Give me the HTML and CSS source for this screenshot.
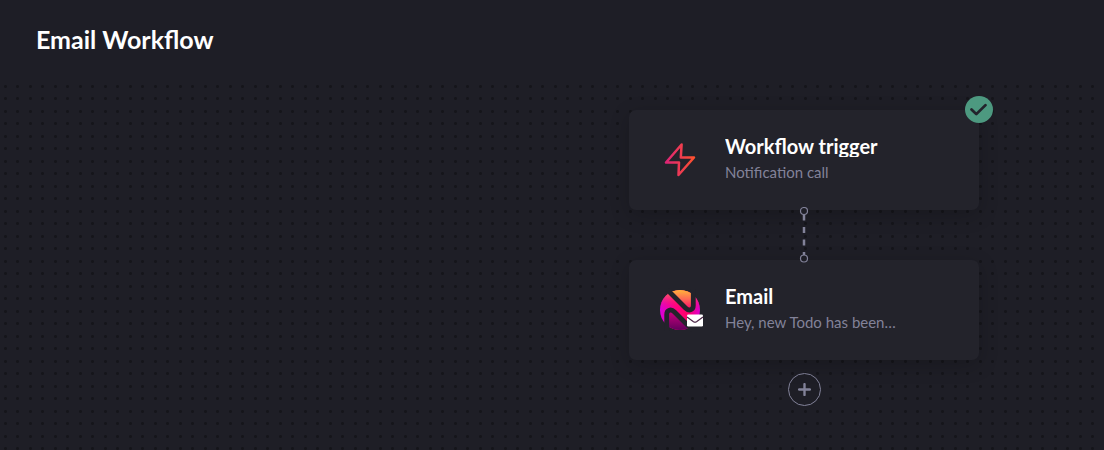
FILE: index.html
```html
<!DOCTYPE html>
<html lang="en">
<head>
<meta charset="utf-8">
<meta name="viewport" content="width=device-width, initial-scale=1">
<title>Email Workflow</title>
<link rel="stylesheet" href="styles.css">
</head>
<body>
<header class="header"><h1 class="page-title">Email Workflow</h1></header>
<main class="canvas">
  <div class="flow">
    <section class="node">
      <svg class="node-icon" viewBox="0 0 44 44" aria-hidden="true">
        <defs><linearGradient id="bolt" x1="0" y1="0" x2="1" y2="0"><stop offset="0" stop-color="#dd2476"/><stop offset="1" stop-color="#ff512f"/></linearGradient></defs>
        <path d="M23.600 6.500 8 24.500H21L20.500 37 36 19.500H22.800Z" fill="none" stroke="url(#bolt)" stroke-width="2.500" stroke-linejoin="round"/>
      </svg>
      <div class="node-text">
        <h2 class="node-title">Workflow trigger</h2>
        <p class="node-note">Notification call</p>
      </div>
      <svg class="badge" viewBox="0 0 28 28" preserveAspectRatio="none" role="img" aria-label="Active">
        <circle cx="14" cy="14" r="14" fill="#4d9980"/>
        <path d="M6.500 14 11.300 18.800 20.500 9.500" fill="none" stroke="#23232b" stroke-width="2.800" stroke-linecap="round" stroke-linejoin="round"/>
      </svg>
    </section>
    <svg class="connector" viewBox="0 0 10 56" aria-hidden="true">
      <path d="M5 7.500V52" stroke="#828299" stroke-width="2.500" stroke-dasharray="6 6.500"/>
      <g fill="#1e1e26" stroke="#828299" stroke-width="1.200"><circle cx="5" cy="4" r="3.500"/><circle cx="5" cy="51.500" r="3.500"/></g>
    </svg>
    <section class="node">
      <svg class="node-icon" viewBox="0 0 44 44" aria-hidden="true">
        <defs>
          <clipPath id="disc"><circle cx="22" cy="22" r="20"/></clipPath>
          <linearGradient id="band" gradientUnits="userSpaceOnUse" x1="2" y1="28" x2="42" y2="28"><stop offset="0" stop-color="#d900dc"/><stop offset=".4" stop-color="#ff0080"/><stop offset=".7" stop-color="#ff0068"/><stop offset="1" stop-color="#dd00d0"/></linearGradient>
          <linearGradient id="glow" gradientUnits="userSpaceOnUse" x1="22" y1="3" x2="22" y2="21"><stop offset="0" stop-color="#ff7a4d"/><stop offset="1" stop-color="#ff006a" stop-opacity="0"/></linearGradient>
          <linearGradient id="upper" gradientUnits="userSpaceOnUse" x1="22" y1="2" x2="22" y2="20"><stop offset="0" stop-color="#ffb33a"/><stop offset=".5" stop-color="#ff6a55"/><stop offset="1" stop-color="#ff1068"/></linearGradient>
          <linearGradient id="lower" gradientUnits="userSpaceOnUse" x1="20" y1="24" x2="20" y2="42"><stop offset="0" stop-color="#c8007c"/><stop offset="1" stop-color="#62005c"/></linearGradient>
        </defs>
        <g clip-path="url(#disc)">
          <rect width="44" height="44" fill="url(#band)"/>
          <rect width="44" height="22" fill="url(#glow)"/>
          <path d="M10.500 3 27.500 20C31 23.500 35.300 22 35.300 17.500V0H10.500Z" fill="url(#upper)"/>
          <path d="M33.500 41 16.500 24C13 20.500 8.700 22 8.700 26.500V44H33.500Z" fill="url(#lower)"/>
        </g>
        <path d="M9.500 2 27.500 20C31 23.500 35.300 22 35.300 17.500V1M34.500 42 16.500 24C13 20.500 8.700 22 8.700 26.500V43" fill="none" stroke="#23232b" stroke-width="4.800"/>
        <rect x="29" y="26.500" width="16" height="12" rx="1.300" fill="#fff"/>
        <path d="M29 29 35.500 33.700Q37 34.700 38.500 33.700L45 29" fill="none" stroke="#4a2545" stroke-width="1.200"/>
      </svg>
      <div class="node-text">
        <h2 class="node-title">Email</h2>
        <p class="node-note">Hey, new Todo has been…</p>
      </div>
    </section>
    <button class="add" type="button" aria-label="Add step">
      <svg class="plus" viewBox="0 0 12 12" aria-hidden="true"><path d="M6 1V11M1 6H11" stroke="#828299" stroke-width="2.200" stroke-linecap="round"/></svg>
    </button>
  </div>
</main>
</body>
</html>
```
FILE: styles.css
```css
* { box-sizing: border-box; }
body {
  margin: 0;
  min-height: 100vh;
  display: flex;
  flex-direction: column;
  background: #1e1e26;
  color: #fff;
  font-family: Lato, sans-serif;
}
h1, h2, p { margin: 0; }
.header { padding: 20px 36px; }
.page-title { font-size: 25px; line-height: 38px; font-weight: 700; }
.canvas {
  flex: 1;
  display: flex;
  justify-content: flex-end;
  padding: 32px 125px 40px 24px;
  --dot: radial-gradient(circle, #15151a 1px, transparent 2px);
  background-image: var(--dot), var(--dot), var(--dot), var(--dot);
  background-size: 25px 25px;
  background-position: -7px -4px, 5px -4px, -7px 8px, 5px 8px;
}
.flow { display: flex; flex-direction: column; align-items: center; width: 350px; }
.node {
  position: relative;
  display: flex;
  align-items: center;
  gap: 23px;
  width: 100%;
  min-height: 100px;
  padding: 20px 29px;
  border-radius: 7px;
  background: #23232b;
  box-shadow: 0 5px 20px rgba(0, 0, 0, 0.2);
}
.node-icon { flex: none; width: 44px; height: 44px; overflow: visible; }
.node-text { min-width: 0; padding-bottom: 3px; }
.node-title { font-size: 20px; line-height: 22px; font-weight: 700; overflow: hidden; }
.node-note {
  margin-top: 5px;
  font-size: 15px;
  line-height: 20px;
  color: #828299;
  white-space: nowrap;
}
.badge { position: absolute; top: -14px; right: -14px; width: 28px; height: 27px; }
.connector { width: 10px; height: 56px; margin: -3px 0; z-index: 1; }
.add {
  display: grid;
  place-items: center;
  width: 33px;
  height: 33px;
  margin-top: 13px;
  padding: 0;
  border: 1px solid #828299;
  border-radius: 50%;
  background: #1e1e26;
}
.plus { width: 13px; height: 13px; }
```
